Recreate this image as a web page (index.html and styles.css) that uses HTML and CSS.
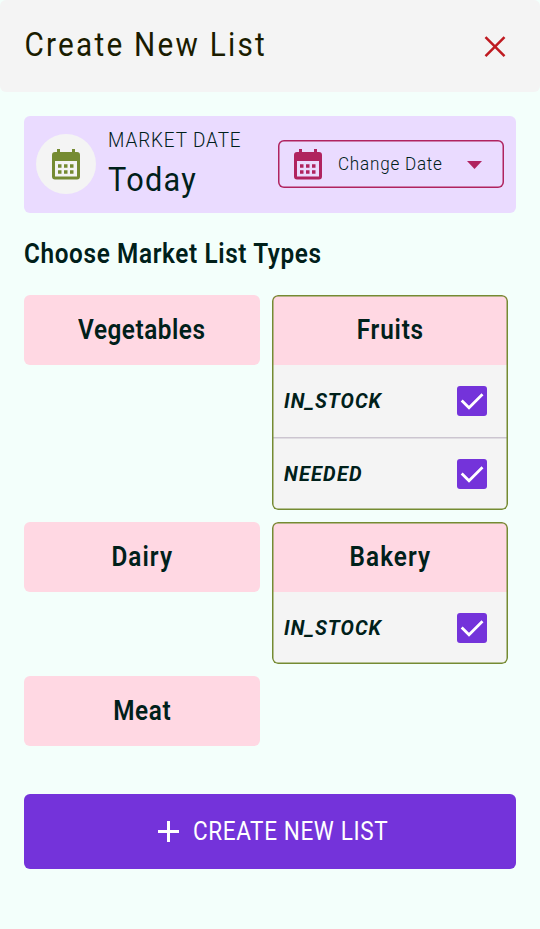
FILE: index.html
```html
<!DOCTYPE html>
<html lang="en">
<head>
<meta charset="utf-8">
<title>Create New List</title>
<link rel="stylesheet" href="styles.css">
</head>
<body>
<svg class="defs" width="0" height="0" aria-hidden="true">
  <symbol id="calendar" viewBox="0 0 28 31">
    <path fill="currentColor" fill-rule="evenodd" d="M5 0h3v3h12V0h3v3h2a3 3 0 0 1 3 3v21.500a3 3 0 0 1-3 3H3a3 3 0 0 1-3-3V6a3 3 0 0 1 3-3h2ZM3 12v15.500h22V12ZM6 15.200h3.500v3.500H6Zm6 0h3.500v3.500H12Zm6 0h3.500v3.500H18ZM6 21.200h3.500v3.500H6Zm6 0h3.500v3.500H12Zm6 0h3.500v3.500H18Z"/>
  </symbol>
  <symbol id="check" viewBox="0 0 30 30">
    <path d="M4.700 14.500 12 21.700 25.500 8.200" fill="none" stroke="#fff" stroke-width="2.800"/>
  </symbol>
</svg>
<header class="header">
  <h1 class="title"><span class="fit">Create New List</span></h1>
  <svg class="close" viewBox="0 0 22 22"><path d="m1.500 1.200 19 19m0-19-19 19" stroke="#bf1a20" stroke-width="2.500"/></svg>
</header>
<main class="main">
  <section class="date">
    <div class="avatar"><svg class="calendar"><use href="#calendar"/></svg></div>
    <div class="date-text">
      <div class="label"><span class="fit">MARKET DATE</span></div>
      <div class="value"><span class="fit">Today</span></div>
    </div>
    <div class="picker">
      <svg class="calendar"><use href="#calendar"/></svg>
      <span class="picker-text"><span class="fit">Change Date</span></span>
      <svg class="caret" viewBox="0 0 15 8"><path d="M0 0h15L7.500 8Z" fill="#b0235f"/></svg>
    </div>
  </section>
  <h2 class="heading"><span class="fit">Choose Market List Types</span></h2>
  <section class="grid">
    <div class="type"><div class="name vegetables"><span class="fit">Vegetables</span></div></div>
    <div class="type open">
      <div class="name fruits"><span class="fit">Fruits</span></div>
      <div class="item"><span class="stock"><span class="fit">IN_STOCK</span></span><svg class="box"><use href="#check"/></svg></div>
      <div class="item"><span class="needed"><span class="fit">NEEDED</span></span><svg class="box"><use href="#check"/></svg></div>
    </div>
    <div class="type"><div class="name dairy"><span class="fit">Dairy</span></div></div>
    <div class="type open">
      <div class="name bakery"><span class="fit">Bakery</span></div>
      <div class="item"><span class="stock"><span class="fit">IN_STOCK</span></span><svg class="box"><use href="#check"/></svg></div>
    </div>
    <div class="type"><div class="name meat"><span class="fit">Meat</span></div></div>
  </section>
  <div class="create">
    <svg class="plus" viewBox="0 0 21 21"><path d="M10.500 0v21M0 10.500h21" stroke="#fff" stroke-width="3"/></svg>
    <span class="create-text"><span class="fit">CREATE NEW LIST</span></span>
  </div>
</main>
</body>
</html>
```
FILE: styles.css
```css
* { box-sizing: border-box; }
body {
  margin: 0;
  min-height: 929px;
  background: #f3fffb;
  color: #00201a;
  font-family: Roboto, "Liberation Sans", sans-serif;
}
.defs { display: none; }
svg { display: block; flex: none; }
h1, h2 { margin: 0; }
.fit { display: inline-block; white-space: nowrap; transform-origin: 0 50%; transform: scaleX(.9); }
.header {
  height: 91.500px;
  padding: 0 34px 0 24px;
  display: flex;
  align-items: center;
  justify-content: space-between;
  background: #f4f4f4;
  border-radius: 6px;
}
.title { margin-bottom: 2px; color: #1a1c00; font-size: 33px; font-weight: 400; line-height: 40px; letter-spacing: 2.500px; }
.title .fit { transform: translateX(.5px) scaleX(.9); }
.close { width: 22px; height: 22px; margin-top: 2px; }
.main { padding: 24px 24px 0; }
.date {
  height: 97px;
  padding: 0 12px;
  display: flex;
  align-items: center;
  background: #eadbff;
  border-radius: 6px;
}
.avatar {
  width: 60px; height: 60px;
  display: grid; place-items: center;
  color: #758b32; background: #f4f4f4;
  border-radius: 50%;
}
.calendar { width: 28px; height: 31px; }
.date-text { width: 170px; margin-left: 12px; padding-top: 6px; }
.label { height: 26px; font-size: 21px; font-weight: 300; line-height: 26px; letter-spacing: 1px; }
.value { height: 54px; font-size: 33px; line-height: 54px; letter-spacing: 1.400px; }
.value .fit { transform: scaleX(.93); }
.picker {
  width: 226px; height: 48px;
  padding: 0 22px 0 16px;
  display: flex; align-items: center;
  box-shadow: inset 0 0 0 1.500px #b0235f;
  border-radius: 6px;
  color: #b0235f;
}
.picker-text { flex: 1; margin-left: 16px; color: #00201a; font-size: 19px; font-weight: 300; line-height: 24px; letter-spacing: .850px; }
.caret { width: 15px; height: 8px; margin-top: 1px; }
.heading { margin-top: 24px; height: 34px; font-size: 27px; font-weight: 600; line-height: 34px; letter-spacing: .710px; }
.grid {
  margin-top: 24px;
  width: 484px;
  display: grid;
  grid-template-columns: 236px 236px;
  gap: 12px;
  align-items: start;
}
.type { border-radius: 6px; overflow: hidden; position: relative; }
.name {
  height: 70px;
  display: flex; align-items: center; justify-content: center;
  background: #ffd8e3;
  font-size: 27px; font-weight: 600; line-height: 34px;
}
.name .fit { transform-origin: 50% 50%; }
.vegetables { letter-spacing: .600px; }
.fruits { letter-spacing: .900px; }
.dairy { letter-spacing: 1.200px; }
.bakery { letter-spacing: 1.200px; }
.meat { letter-spacing: .700px; }
.open { background: #f4f4f4; }
.open::after {
  content: "";
  position: absolute; inset: 0;
  box-shadow: inset 0 0 0 1.500px #758b32;
  border-radius: 6px;
}
.item {
  height: 72px;
  padding: 0 21px 0 12px;
  display: flex; align-items: center; justify-content: space-between;
  font-size: 21px; font-weight: 700; font-style: italic; line-height: 26px;
}
.item + .item { height: 73.500px; box-shadow: inset 0 1.500px #ccc5d0; padding-top: 1.500px; }
.stock .fit, .needed .fit { transform: scaleX(.95); }
.stock { letter-spacing: 1.050px; }
.needed { letter-spacing: 1.300px; }
.box { width: 30px; height: 30px; border-radius: 3px; background: #7433da; }
.create {
  margin-top: 48px;
  height: 75px;
  display: flex; align-items: center;
  padding-left: 134px;
  background: #7433da;
  border-radius: 6px;
  color: #fff;
}
.plus { width: 21px; height: 21px; }
.create-text { margin-left: 13.500px; font-size: 25px; line-height: 32px; letter-spacing: .700px; }
```
